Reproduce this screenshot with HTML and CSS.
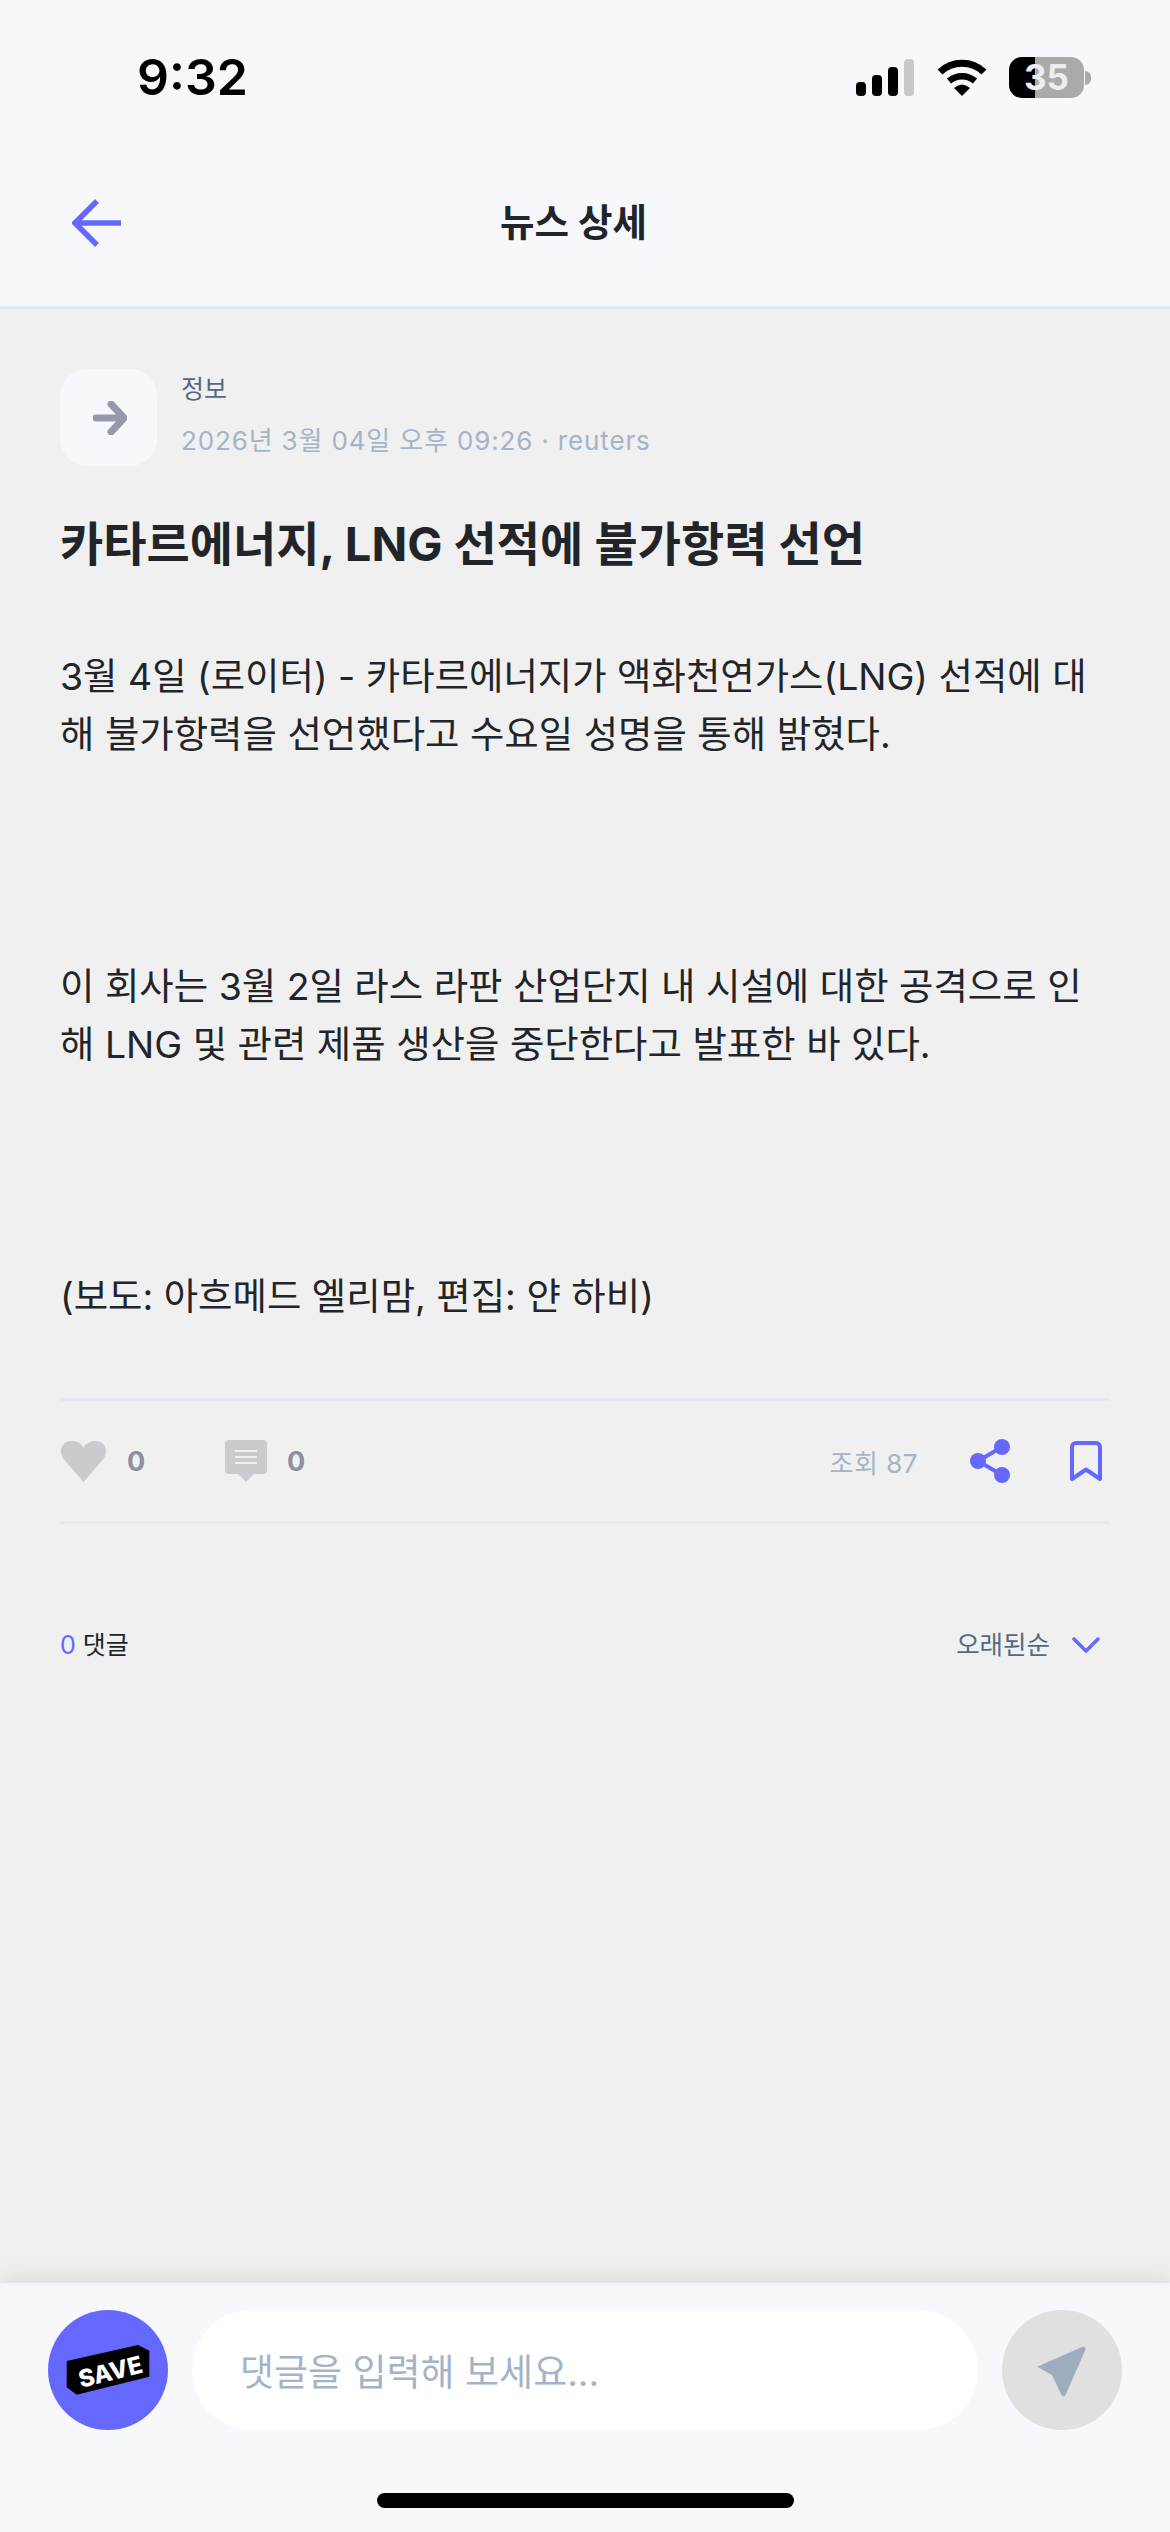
FILE: index.html
```html
<!DOCTYPE html>
<html lang="ko">
<head>
    <meta charset="UTF-8">
    <meta name="viewport" content="width=device-width, initial-scale=1.0">
    <title>뉴스 상세</title>
    <link rel="stylesheet" href="styles.css">
</head>
<body>
    <div class="page">
        <header class="top">
            <div class="status-bar">
                <span class="time">9:32</span>
                <div class="status-icons">
                    <svg class="signal" width="58" height="37" viewBox="0 0 58 37">
                        <rect x="0" y="23" width="10" height="14" rx="4" fill="#000"/>
                        <rect x="16" y="16" width="10" height="21" rx="4" fill="#000"/>
                        <rect x="32" y="8" width="10" height="29" rx="4" fill="#000"/>
                        <rect x="48" y="0" width="10" height="37" rx="4" fill="#c6c8cc"/>
                    </svg>
                    <svg class="wifi" width="50" height="37" viewBox="0 0 50 37">
                        <path d="M3 13 A32 32 0 0 1 47 13" fill="none" stroke="#000" stroke-width="7"/>
                        <path d="M12 22 A20 20 0 0 1 38 22" fill="none" stroke="#000" stroke-width="6.5"/>
                        <path d="M17 29 Q25 22 33 29 L25 37 Z" fill="#000"/>
                    </svg>
                    <div class="battery">35</div>
                    <div class="battery-nub"></div>
                </div>
            </div>
            <nav class="nav">
                <a class="back" href="#">
                    <svg width="50" height="48" viewBox="0 0 50 48">
                        <path d="M49 24 H4 M25 2 L3 24 L25 46" fill="none" stroke="#6468ff" stroke-width="5.500"/>
                    </svg>
                </a>
                <h1>뉴스 상세</h1>
            </nav>
        </header>

        <main class="content">
            <div class="meta">
                <div class="source-icon">
                    <svg width="34" height="34" viewBox="0 0 34 34">
                        <path d="M3 17 H30 M18 3 L31 17 L18 31" fill="none" stroke="#9599ad" stroke-width="7" stroke-linecap="round" stroke-linejoin="round"/>
                    </svg>
                </div>
                <div class="meta-text">
                    <div class="category">정보</div>
                    <div class="date">2026년 3월 04일 오후 09:26 · reuters</div>
                </div>
            </div>

            <h2 class="headline">카타르에너지, LNG 선적에 불가항력 선언</h2>

            <div class="article">
                <p>3월 4일 (로이터) - 카타르에너지가 액화천연가스(LNG) 선적에 대해 불가항력을 선언했다고 수요일 성명을 통해 밝혔다.</p>
                <p>이 회사는 3월 2일 라스 라판 산업단지 내 시설에 대한 공격으로 인해 LNG 및 관련 제품 생산을 중단한다고 발표한 바 있다.</p>
                <p>(보도: 아흐메드 엘리맘, 편집: 얀 하비)</p>
            </div>

            <div class="actions">
                <div class="action like">
                    <svg width="47" height="41" viewBox="0 0 47 41">
                        <path d="M23.5 41 L4 18.5 C-2 11 1 0 12 0 C17 0 21 2.500 23.500 6.500 C26 2.500 30 0 35 0 C46 0 49 11 43 18.500 Z" fill="#c9cccf"/>
                    </svg>
                    <span class="count">0</span>
                </div>
                <div class="action">
                    <svg width="42" height="42" viewBox="0 0 42 42">
                        <path d="M4 0 H38 A4 4 0 0 1 42 4 V30 A4 4 0 0 1 38 34 H29 L21 42 L13 34 H4 A4 4 0 0 1 0 30 V4 A4 4 0 0 1 4 0 Z" fill="#c9cccf"/>
                        <path d="M10 11 H32 M10 17 H32 M10 23 H32" stroke="#f0f0f0" stroke-width="2"/>
                    </svg>
                    <span class="count">0</span>
                </div>
                <span class="views">조회 87</span>
                <svg class="share" width="40" height="44" viewBox="0 0 40 44">
                    <path d="M32 8 L8 22 L32 36" fill="none" stroke="#6468ff" stroke-width="4"/>
                    <circle cx="32" cy="8" r="8" fill="#6468ff"/>
                    <circle cx="8" cy="22" r="8" fill="#6468ff"/>
                    <circle cx="32" cy="36" r="8" fill="#6468ff"/>
                </svg>
                <svg class="bookmark" width="32" height="40" viewBox="0 0 32 40">
                    <path d="M2 38 V6 A4 4 0 0 1 6 2 H26 A4 4 0 0 1 30 6 V38 L16 28.500 Z" fill="none" stroke="#6468ff" stroke-width="4" stroke-linejoin="round"/>
                </svg>
            </div>

            <div class="comments-head">
                <div class="comment-count"><span class="num">0</span> 댓글</div>
                <div class="sort">
                    <span>오래된순</span>
                    <svg width="28" height="16" viewBox="0 0 28 16">
                        <path d="M2 2 L14 14 L26 2" fill="none" stroke="#6468ff" stroke-width="3.500" stroke-linecap="round" stroke-linejoin="round"/>
                    </svg>
                </div>
            </div>
        </main>

        <footer class="bottom">
            <div class="input-row">
                <svg class="avatar" width="120" height="120" viewBox="0 0 120 120">
                    <circle cx="60" cy="60" r="60" fill="#6468ff"/>
                    <path d="M18.700 51 L90 35 L101.300 40.700 V66.700 L28.700 84.700 L18.700 77.300 Z" fill="#000"/>
                    <text class="save-text" x="33" y="78" transform="rotate(-14 33 78)">SAVE</text>
                </svg>
                <div class="comment-input">댓글을 입력해 보세요...</div>
                <div class="send">
                    <svg width="120" height="120" viewBox="0 0 120 120">
                        <path d="M35 56.700 L80 37 Q84 36 83.300 40 L64 84 Q61.700 89 59 84 L50 65 Z" fill="#9eadbd"/>
                    </svg>
                </div>
            </div>
            <div class="home-indicator"></div>
        </footer>
    </div>
</body>
</html>
```

FILE: styles.css
```css
* {
    box-sizing: border-box;
}
body {
    margin: 0;
    background-color: #f0f0f0;
    font-family: Inter, "Noto Sans CJK KR", sans-serif;
}
.page {
    width: 1170px;
    height: 2532px;
    display: flex;
    flex-direction: column;
    overflow: hidden;
}
.top {
    height: 309px;
    background-color: #f6f8fc;
    border-bottom: 3px solid #e2e8f0;
}
.status-bar {
    height: 154px;
    padding: 57px 79px 0 137px;
    display: flex;
    justify-content: space-between;
    align-items: flex-start;
}
.time {
    font-size: 50px;
    line-height: 41px;
    font-weight: 600;
    color: #000;
}
.status-icons {
    display: flex;
    align-items: center;
    height: 41px;
}
.wifi {
    margin-left: 23px;
}
.battery {
    width: 75px;
    height: 41px;
    margin-left: 22px;
    border-radius: 13px;
    background: linear-gradient(90deg, #000 26px, #aaaaaa 26px);
    color: #eeeeee;
    font-size: 35px;
    font-weight: 700;
    line-height: 41px;
    text-align: center;
}
.battery-nub {
    width: 6px;
    height: 14px;
    margin-left: 1px;
    border-radius: 0 7px 7px 0;
    background-color: #aaaaaa;
}
.nav {
    height: 152px;
    padding: 45px 72px 0;
    display: flex;
    align-items: flex-start;
}
.back {
    display: block;
    width: 50px;
    height: 48px;
}
.nav h1 {
    margin: 0 0 0 378px;
    font-size: 37.500px;
    line-height: 48px;
    font-weight: 700;
    color: #212529;
}
.content {
    flex: 1;
    padding: 60px 60px 0;
}
.meta {
    display: flex;
    gap: 24px;
}
.source-icon {
    width: 97px;
    height: 97px;
    border-radius: 27px;
    background-color: #f6f8fc;
    display: flex;
    align-items: center;
    justify-content: center;
}
.source-icon svg {
    margin-left: 2px;
    margin-top: 0;
}
.category {
    font-size: 25px;
    line-height: 34px;
    color: #53697f;
    margin-top: 3px;
}
.date {
    font-size: 26px;
    line-height: 34px;
    margin-top: 18px;
    letter-spacing: 0.850px;
    color: #a4b4c6;
}
.headline {
    margin: 48px 0 0;
    font-size: 47px;
    line-height: 60px;
    font-weight: 700;
    color: #212529;
}
.article {
    margin-top: 74px;
}
.article p {
    margin: 0 0 194px;
    font-size: 37.400px;
    line-height: 58px;
    color: #212529;
    word-break: break-all;
}
.article p:last-child {
    margin-bottom: 0;
}
.actions {
    margin-top: 72px;
    height: 126px;
    border-top: 3px solid #e6e9ed;
    border-bottom: 3px solid #e6e9ed;
    display: flex;
    align-items: center;
}
.action {
    display: flex;
    align-items: center;
    gap: 20px;
}
.like {
    width: 165px;
}
.count {
    font-size: 27px;
    font-weight: 700;
    color: #8b90a0;
}
.views {
    margin-left: auto;
    font-size: 26px;
    letter-spacing: 0.500px;
    color: #a4b4c6;
}
.share {
    margin-left: 52px;
}
.bookmark {
    margin-left: 60px;
    margin-right: 8px;
}
.comments-head {
    margin-top: 104px;
    display: flex;
    justify-content: space-between;
    align-items: center;
}
.comment-count {
    font-size: 25px;
    line-height: 34px;
    color: #212529;
}
.num {
    color: #6468ff;
}
.sort {
    display: flex;
    align-items: center;
    gap: 22px;
    padding-right: 10px;
    font-size: 25.500px;
    line-height: 34px;
    color: #53697f;
}
.bottom {
    height: 249px;
    background-color: #f6f8fc;
    border-top: 3px solid #f1f4f9;
    box-shadow: 0 -4px 22px rgba(0, 0, 0, 0.1);
    padding: 24px 48px 0;
}
.input-row {
    display: flex;
    align-items: center;
    gap: 24px;
}
.avatar {
    flex-shrink: 0;
}
.save-text {
    font-family: Inter, sans-serif;
    font-size: 24px;
    font-weight: 800;
    fill: #fff;
}
.comment-input {
    flex: 1;
    height: 120px;
    padding-left: 48px;
    border-radius: 60px;
    background-color: #fff;
    display: flex;
    align-items: center;
    font-size: 37px;
    color: #a4b4c6;
}
.send {
    width: 120px;
    height: 120px;
    border-radius: 50%;
    background-color: #e0e0e0;
}
.home-indicator {
    width: 417px;
    height: 15px;
    margin: 63px auto 0 329px;
    border-radius: 8px;
    background-color: #000;
}
```
